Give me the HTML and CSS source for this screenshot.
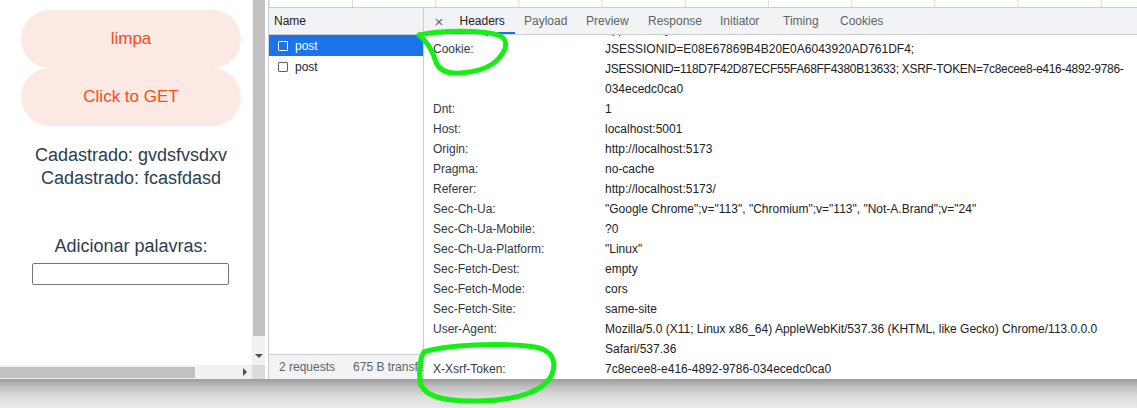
FILE: index.html
```html
<!DOCTYPE html>
<html lang="pt">
<head>
<meta charset="utf-8">
<title>Network</title>
<link rel="stylesheet" href="styles.css">
</head>
<body>
<div class="screen">
  <div class="main">
    <div class="browser">
      <div class="page">
        <div class="btn">limpa</div>
        <div class="btn">Click to GET</div>
        <div class="lines">
          <div>Cadastrado: gvdsfvsdxv</div>
          <div>Cadastrado: fcasfdasd</div>
        </div>
        <div class="label">Adicionar palavras:</div>
        <input class="field" type="text">
      </div>
      <div class="vscroll">
        <div class="vthumb"></div>
        <div class="vtrack"><span class="arrow-down"></span></div>
      </div>
      <div class="hscroll">
        <div class="hthumb"></div>
        <span class="arrow-right"></span>
      </div>
      <div class="corner"></div>
    </div>
    <div class="gap"></div>
    <div class="devtools">
      <div class="overview"></div>
      <div class="net">
        <div class="names">
          <div class="names-head">Name</div>
          <div class="req selected"><span class="cb"></span>post</div>
          <div class="req"><span class="cb"></span>post</div>
          <div class="status">
            <span>2 requests</span>
            <span class="sep"></span>
            <span>675 B transferred</span>
          </div>
        </div>
        <div class="details">
          <div class="tabs">
            <span class="close">×</span>
            <span class="tab active t1">Headers</span>
            <span class="tab t2">Payload</span>
            <span class="tab t3">Preview</span>
            <span class="tab t4">Response</span>
            <span class="tab t5">Initiator</span>
            <span class="tab t6">Timing</span>
            <span class="tab t7">Cookies</span>
          </div>
          <div class="content">
            <div class="hdrs">
              <div class="k">Content-Type:</div><div class="v">application/json</div>
              <div class="k">Cookie:</div><div class="v">JSESSIONID=E08E67869B4B20E0A6043920AD761DF4;<br><span class="tight">JSESSIONID=118D7F42D87ECF55FA68FF4380B13633; XSRF-TOKEN=7c8ecee8-e416-4892-9786-</span><br>034ecedc0ca0</div>
              <div class="k">Dnt:</div><div class="v">1</div>
              <div class="k">Host:</div><div class="v">localhost:5001</div>
              <div class="k">Origin:</div><div class="v">http://localhost:5173</div>
              <div class="k">Pragma:</div><div class="v">no-cache</div>
              <div class="k">Referer:</div><div class="v">http://localhost:5173/</div>
              <div class="k">Sec-Ch-Ua:</div><div class="v">"Google Chrome";v="113", "Chromium";v="113", "Not-A.Brand";v="24"</div>
              <div class="k">Sec-Ch-Ua-Mobile:</div><div class="v">?0</div>
              <div class="k">Sec-Ch-Ua-Platform:</div><div class="v">"Linux"</div>
              <div class="k">Sec-Fetch-Dest:</div><div class="v">empty</div>
              <div class="k">Sec-Fetch-Mode:</div><div class="v">cors</div>
              <div class="k">Sec-Fetch-Site:</div><div class="v">same-site</div>
              <div class="k">User-Agent:</div><div class="v">Mozilla/5.0 (X11; Linux x86_64) AppleWebKit/537.36 (KHTML, like Gecko) Chrome/113.0.0.0<br>Safari/537.36</div>
              <div class="k">X-Xsrf-Token:</div><div class="v">7c8ecee8-e416-4892-9786-034ecedc0ca0</div>
            </div>
          </div>
        </div>
      </div>
    </div>
  </div>
  <div class="shadow"></div>
  <svg class="annot" width="1137" height="408" viewBox="0 0 1137 408">
    <path d="M419,35 C440,30 482,30 498,35 C509,39 507,48 500,57 C492,67 478,72 460,73 C446,74 439,70 436,62 C433,52 429,43 419,35"/>
    <path d="M424,352 C446,345 500,342 535,347 C552,350 557,361 552,374 C545,391 518,400 480,401 C442,402 421,395 420,380 C419,368 420,358 424,352"/>
  </svg>
</div>
</body>
</html>
```
FILE: styles.css
```css
* { box-sizing: border-box; }
html, body { margin: 0; padding: 0; }
body {
  width: 1137px;
  height: 408px;
  overflow: hidden;
  font-family: "Liberation Sans", Arial, sans-serif;
  background: #fff;
}
.screen {
  position: relative;
  width: 1137px;
  height: 408px;
  display: flex;
  flex-direction: column;
}
.main {
  height: 379px;
  display: flex;
  background: #fff;
}

/* left browser page */
.browser {
  width: 265px;
  display: grid;
  grid-template-columns: 252px 13px;
  grid-template-rows: 365px 14px;
}
.page {
  overflow: hidden;
  padding-top: 10px;
  color: #2c3e50;
  display: flex;
  flex-direction: column;
}
.btn {
  width: 220px;
  height: 58px;
  margin-left: 21px;
  border-radius: 29px;
  background: #fde9e3;
  color: #fc4a17;
  font-size: 17px;
  display: flex;
  align-items: center;
  justify-content: center;
}
.lines {
  width: 220px;
  margin-left: 21px;
  margin-top: 18px;
  text-align: center;
  font-size: 18px;
  line-height: 23px;
}
.label {
  width: 220px;
  margin-left: 21px;
  margin-top: 45px;
  text-align: center;
  font-size: 18px;
  line-height: 23px;
}
.field {
  width: 197px;
  height: 22px;
  margin: 5px 0 0 32px;
  border: 1px solid #767676;
  border-radius: 2px;
  background: #fff;
  padding: 0;
}
.vscroll {
  background: #f1f1f1;
  display: flex;
  flex-direction: column;
}
.vthumb {
  height: 336px;
  margin-left: 1px;
  background: #c1c1c1;
}
.vtrack {
  flex: 1;
  display: flex;
  align-items: flex-end;
  justify-content: center;
  padding-bottom: 7px;
}
.arrow-down {
  width: 0;
  height: 0;
  border-left: 4px solid transparent;
  border-right: 4px solid transparent;
  border-top: 4px solid #505050;
}
.hscroll {
  background: #f1f1f1;
  display: flex;
  align-items: center;
  justify-content: space-between;
  padding-right: 5px;
}
.hthumb {
  width: 195px;
  height: 11px;
  background: #c1c1c1;
}
.arrow-right {
  width: 0;
  height: 0;
  border-top: 4px solid transparent;
  border-bottom: 4px solid transparent;
  border-left: 4px solid #505050;
}
.corner { background: #dcdcdc; }
.gap { width: 3px; background: #fff; }

/* devtools */
.devtools {
  flex: 1;
  display: flex;
  flex-direction: column;
  border-left: 1px solid #cacdd1;
  font-size: 12px;
  color: #202124;
  min-width: 0;
}
.overview {
  height: 8px;
  border-bottom: 1px solid #cacdd1;
  background-image: linear-gradient(to right, transparent 82.2px, #dadce0 82.2px, #dadce0 83.2px);
  background-size: 83.2px 100%;
  background-position: 0.8px 0;
}
.net {
  flex: 1;
  display: flex;
  min-height: 0;
}
.names {
  width: 155px;
  border-right: 1px solid #cacdd1;
  display: flex;
  flex-direction: column;
  overflow: hidden;
}
.names-head {
  height: 27px;
  background: #f1f3f4;
  border-bottom: 1px solid #cacdd1;
  padding-left: 5px;
  display: flex;
  align-items: center;
}
.req {
  height: 21px;
  display: flex;
  align-items: center;
  padding-left: 9px;
  gap: 7px;
  color: #202124;
}
.req .cb {
  width: 10px;
  height: 10px;
  border: 1px solid #5f6368;
  border-radius: 1px;
}
.req.selected {
  background: #1a73e8;
  color: #fff;
}
.req.selected .cb { border-color: #fff; }
.status {
  margin-top: auto;
  height: 25px;
  border-top: 1px solid #cacdd1;
  background: #f1f3f4;
  display: flex;
  align-items: center;
  white-space: nowrap;
  padding-left: 10px;
  gap: 9px;
  color: #5f6368;
}
.status .sep {
  width: 1px;
  height: 16px;
  background: #cacdd1;
}
.details {
  flex: 1;
  display: flex;
  flex-direction: column;
  min-width: 0;
}
.tabs {
  height: 27px;
  background: #f1f3f4;
  border-bottom: 1px solid #cacdd1;
  display: flex;
  align-items: stretch;
  white-space: nowrap;
}
.close {
  width: 22px;
  margin-left: 4px;
  display: flex;
  align-items: center;
  justify-content: center;
  color: #5f6368;
  font-size: 15px;
}
.tab {
  padding-left: 9.5px;
  display: flex;
  align-items: center;
  color: #5f6368;
  border-bottom: 2px solid transparent;
  padding-top: 2px;
}
.tab.active {
  color: #202124;
  border-bottom-color: #1a73e8;
}
.t1 { width: 64.5px; }
.t2 { width: 62px; }
.t3 { width: 62px; }
.t4 { width: 72px; }
.t5 { width: 63px; }
.t6 { width: 57px; }
.t7 { width: 63px; }
.content {
  flex: 1;
  overflow: hidden;
  background: #fff;
}
.hdrs {
  display: grid;
  grid-template-columns: 172px 1fr;
  padding-left: 9px;
  margin-top: -16px;
  line-height: 20px;
  white-space: nowrap;
}
.k { color: #303942; }
.v { color: #202124; }
.tight { letter-spacing: -0.3px; }

.shadow {
  flex: 1;
  background: linear-gradient(to bottom, #9c9c9c 0%, #bdbdbd 25%, #dcdcdc 60%, #e9e9e9 100%);
}
.annot {
  position: absolute;
  left: 0;
  top: 0;
  pointer-events: none;
}
.annot path {
  fill: none;
  stroke: #14f014;
  stroke-width: 5;
  stroke-linecap: round;
  stroke-linejoin: round;
}
```
